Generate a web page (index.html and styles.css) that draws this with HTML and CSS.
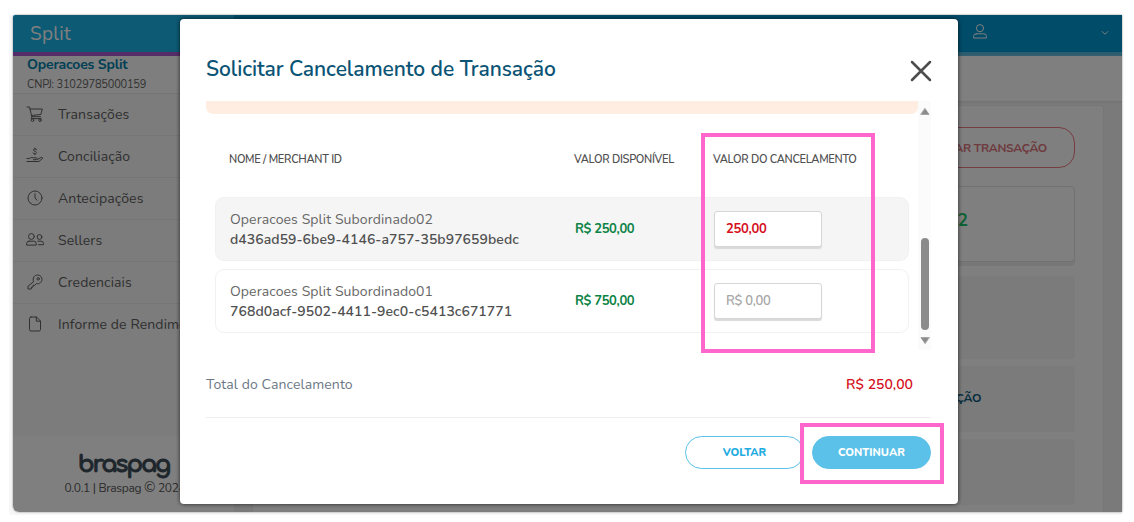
FILE: index.html
```html
<!DOCTYPE html>
<html lang="pt-BR">

<head>
    <meta charset="UTF-8" />
    <meta name="viewport" content="width=device-width, initial-scale=1.0" />
    <title>Split</title>
    <link rel="stylesheet" href="styles.css">
</head>

<body>
    <div class="frame">
        <div class="app">
            <!-- top bar -->
            <header class="top-bar">
                <div class="brand">Split</div>
                <div class="top-user">
                    <svg class="user-icon" viewBox="0 0 14 15">
                        <circle cx="7" cy="4.2" r="3.6" />
                        <path d="M3.2 9.8h7.6q2.6 0 2.6 2.6v1.6H.6v-1.6q0-2.600 2.600-2.600z" />
                    </svg>
                    <svg class="chevron" viewBox="0 0 8 6">
                        <path d="M1.200 1.500 4 4.300 6.800 1.500" />
                    </svg>
                </div>
            </header>

            <div class="content">
                <!-- sidebar -->
                <aside class="sidebar">
                    <div class="account">
                        <div class="account-name">Operacoes Split</div>
                        <div class="account-doc">CNPJ: 31029785000159</div>
                    </div>
                    <nav class="menu">
                        <a class="menu-item">
                            <svg viewBox="0 0 18 18">
                                <path d="M1 2h2.500l2.300 9.700h8.700M4 4h12.300l-1.500 5.500-9.500 1M6 11.700l-.8 1.900h9.800" />
                                <circle cx="6.500" cy="15.200" r="1.300" />
                                <circle cx="14" cy="15.200" r="1.300" />
                            </svg>
                            <span>Transações</span>
                        </a>
                        <a class="menu-item">
                            <svg viewBox="0 0 18 18">
                                <path d="M10.600 2.500q-.7-.7-1.700-.6c-2 .2-1.900 2 0 2.300 2 .3 2.200 2.300 0 2.500q-1.200.1-1.900-.7M8.900 1v1M8.900 6.700v1" />
                                <path d="M1 11.500h2.300q2-1.700 4-.7h3.200q1.300.9 0 1.900H7.500M11.600 12.400l3.600-2q1.600-.2 1.400 1.100l-3.700 3H1" />
                            </svg>
                            <span>Conciliação</span>
                        </a>
                        <a class="menu-item">
                            <svg viewBox="0 0 18 18">
                                <circle cx="9" cy="9" r="7" />
                                <path d="M9 4.700V9l2 2.200" />
                            </svg>
                            <span>Antecipações</span>
                        </a>
                        <a class="menu-item">
                            <svg viewBox="0 0 18 18">
                                <circle cx="5.400" cy="5.500" r="2.900" />
                                <circle cx="13.500" cy="6" r="2.400" />
                                <path d="M3 10.200h4.800q2.400 0 2.400 2.400v1.500H.6v-1.500q0-2.400 2.400-2.400zM11.800 10.200h3.300q2.400 0 2.400 2.200v1.300h-5" />
                            </svg>
                            <span>Sellers</span>
                        </a>
                        <a class="menu-item">
                            <svg viewBox="0 0 18 18">
                                <path d="M7.400 8.400C6.200 4.700 8.700 2 11.500 2S16 4.100 16 6.500s-2.500 4.900-5.600 4.100L8.700 12.300H7v1.800H5.300V16H2v-2.500z" />
                                <circle cx="12.200" cy="5.800" r="1.200" />
                            </svg>
                            <span>Credenciais</span>
                        </a>
                        <a class="menu-item">
                            <svg viewBox="0 0 18 18">
                                <path d="M5 2h5.500l4 4v8.500q0 1.500-1.500 1.500H5q-1.500 0-1.500-1.500v-11Q3.500 2 5 2zM10.300 2v4.200h4.200" />
                            </svg>
                            <span>Informe de Rendimentos</span>
                        </a>
                    </nav>
                    <div class="sidebar-footer">
                        <div class="logo">braspag</div>
                        <div class="version">0.0.1 | Braspag <span class="copy">©</span> 2024</div>
                    </div>
                </aside>

                <!-- page behind the modal -->
                <main class="page">
                    <div class="page-header"></div>
                    <section class="panel">
                        <button class="cancel-btn">CANCELAR TRANSAÇÃO</button>
                        <div class="card status"><span>2</span></div>
                        <div class="card tall"></div>
                        <div class="card link"><span>ÇÃO</span></div>
                        <div class="card"></div>
                    </section>
                </main>
            </div>
            <div class="backdrop"></div>
        </div>
    </div>

    <!-- modal -->
    <div class="modal">
        <div class="modal-header">
            <h1 class="modal-title">Solicitar Cancelamento de Transação</h1>
            <svg class="close" viewBox="0 0 22 22">
                <path d="M2 2 20 20M20 2 2 20" />
            </svg>
        </div>

        <div class="modal-body">
            <div class="scroll-content">
                <div class="alert"></div>
                <div class="row table-head">
                    <div class="head-name">NOME / MERCHANT ID</div>
                    <div class="head-available">VALOR DISPONÍVEL</div>
                    <div class="head-cancel">VALOR DO CANCELAMENTO</div>
                </div>
                <div class="row merchant active">
                    <div class="merchant-info">
                        <div class="merchant-name">Operacoes Split Subordinado02</div>
                        <div class="merchant-id">d436ad59-6be9-4146-a757-35b97659bedc</div>
                    </div>
                    <div class="available">R$ 250,00</div>
                    <div class="field filled">250,00</div>
                </div>
                <div class="row merchant">
                    <div class="merchant-info">
                        <div class="merchant-name">Operacoes Split Subordinado01</div>
                        <div class="merchant-id">768d0acf-9502-4411-9ec0-c5413c671771</div>
                    </div>
                    <div class="available">R$ 750,00</div>
                    <div class="field">R$ 0,00</div>
                </div>
            </div>
            <div class="scrollbar">
                <svg class="arrow" viewBox="0 0 10 7"><path d="M5 .5 9.200 6.500H.8z" /></svg>
                <div class="thumb"></div>
                <svg class="arrow" viewBox="0 0 10 7"><path d="M5 6.500.8.5h8.400z" /></svg>
            </div>
        </div>

        <div class="total">
            <span class="total-label">Total do Cancelamento</span>
            <span class="total-value">R$ 250,00</span>
        </div>

        <div class="modal-actions">
            <button class="btn back">VOLTAR</button>
            <button class="btn continue">CONTINUAR</button>
        </div>
    </div>

    <!-- highlights -->
    <div class="highlight highlight-column"></div>
    <div class="highlight highlight-continue"></div>
</body>

</html>
```

FILE: styles.css
```css
* {
    box-sizing: border-box;
}

html,
body {
    height: 100%;
    margin: 0;
    font-family: Nunito, Lato, sans-serif;
    background-color: white;
    overflow: hidden;
}

body {
    position: relative;
    padding: 15px 12px 0 9px;
}

button {
    font-family: inherit;
}

svg {
    fill: none;
    stroke: currentColor;
    stroke-linecap: round;
    stroke-linejoin: round;
}

.frame {
    height: 500px;
    padding: 0 0 3px 4px;
    background-color: #f7f7f7;
}

.app {
    position: relative;
    height: 497px;
    display: flex;
    flex-direction: column;
    border-radius: 3px 0 0 6px;
    box-shadow: 0 0 2px #777;
    overflow: hidden;
}

.backdrop {
    position: absolute;
    inset: 0;
    background-color: rgba(0, 0, 0, 0.5);
}

/* top bar */
.top-bar {
    display: flex;
    height: 41px;
    background: #0098d2;
}

.brand {
    width: 221px;
    padding: 7px 0 0 17px;
    background-color: #1ab4e8;
    border-bottom: 4px solid #ac58d0;
    color: white;
    font-size: 19px;
    line-height: 25px;
    letter-spacing: 0.3px;
}

.top-user {
    flex: 1;
    display: flex;
    align-items: center;
    justify-content: flex-end;
    gap: 114px;
    padding-right: 13px;
    border-bottom: 4px solid #55b8df;
    color: white;
}

.user-icon {
    width: 14px;
    height: 15px;
    margin-top: -4px;
    stroke-width: 1;
}

.chevron {
    width: 8px;
    height: 6px;
    margin-top: -2px;
}

.content {
    flex: 1;
    display: flex;
    min-height: 0;
}

/* sidebar */
.sidebar {
    width: 221px;
    display: flex;
    flex-direction: column;
    background-color: #f8f8f8;
}

.account {
    height: 37px;
    padding-left: 14px;
    background-color: #fcfcfc;
    white-space: nowrap;
}

.account-name {
    color: #0080ab;
    font-size: 14px;
    font-weight: 700;
    line-height: 18px;
    letter-spacing: -0.2px;
}

.account-doc {
    margin-top: 2px;
    color: #666;
    font-size: 11px;
    line-height: 17px;
    letter-spacing: -0.2px;
}

.menu {
    flex: 1;
}

.menu-item {
    height: 42px;
    display: flex;
    align-items: center;
    gap: 14px;
    padding-left: 13px;
    border-top: 1px solid #eaeaea;
    color: #606060;
    font-size: 14px;
    letter-spacing: 0.12px;
    white-space: nowrap;
}

.menu-item svg {
    width: 18px;
    height: 18px;
    margin-top: -1px;
}

.sidebar-footer {
    height: 76px;
    padding-top: 15px;
    background-color: white;
    text-align: center;
    white-space: nowrap;
}

.logo {
    color: #3c4c58;
    font-family: Comfortaa, Quicksand, Inter, sans-serif;
    font-size: 24px;
    font-weight: 700;
    line-height: 28px;
    letter-spacing: -2.1px;
    -webkit-text-stroke: 0.8px #3c4c58;
}

.version {
    padding-left: 3px;
    color: #555;
    font-size: 12px;
    line-height: 18px;
    letter-spacing: -0.3px;
}

.copy {
    font-size: 14px;
}

/* page */
.page {
    flex: 1;
    display: flex;
    flex-direction: column;
    background-color: #f5f5f5;
}

.page-header {
    height: 48px;
    background-color: white;
    box-shadow: 0 1px 3px #ddd;
}

.panel {
    flex: 1;
    display: flex;
    flex-direction: column;
    margin: 4px 18px 0;
    padding: 21px 28px 0;
    background-color: white;
    border: 1px solid #eee;
    border-bottom: none;
    border-radius: 4px 4px 0 0;
}

.cancel-btn {
    align-self: flex-end;
    flex: none;
    height: 41px;
    padding: 0 27px 0 36px;
    background-color: transparent;
    border: 1px solid #ea7a82;
    border-radius: 16px;
    color: #dd747c;
    font-size: 12px;
    font-weight: 700;
    letter-spacing: -0.3px;
}

.card {
    flex: none;
    height: 66px;
    margin-bottom: 7px;
    padding-right: 94px;
    display: flex;
    align-items: center;
    justify-content: flex-end;
    background-color: #f6f6f6;
    border-radius: 4px;
}

.status {
    height: 76px;
    margin: 18px 0 14px;
    padding-right: 106px;
    padding-bottom: 8px;
    background-color: white;
    border: 1px solid #e2e2e2;
    box-shadow: 0 4px 0 #efefef;
    color: #1ec46a;
    font-size: 17px;
    font-weight: 700;
}

.tall {
    height: 83px;
}

.link {
    padding-bottom: 3px;
    color: #0b5a7d;
    font-size: 12px;
    font-weight: 700;
    letter-spacing: -0.3px;
}

/* modal */
.modal {
    position: absolute;
    top: 19px;
    left: 180px;
    width: 778px;
    height: 485px;
    padding: 0 27px 0 26px;
    background-color: white;
    border-radius: 4px;
    box-shadow: 0 0 4px rgba(0, 0, 0, 0.7);
}

.modal-header {
    height: 82px;
    display: flex;
    justify-content: space-between;
    padding-top: 36px;
}

.modal-title {
    margin: 0;
    color: #0b5475;
    font-size: 21px;
    font-weight: 600;
    line-height: 29px;
    letter-spacing: -0.06px;
}

.close {
    width: 22px;
    height: 22px;
    margin: 5px -1px 0 0;
    color: #4d4d4d;
    stroke-width: 2.500;
}

.modal-body {
    height: 249px;
    display: flex;
    justify-content: space-between;
}

.scroll-content {
    width: 712px;
}

.alert {
    height: 13px;
    background-color: #ffede1;
    border-radius: 0 0 7px 7px;
}

.row {
    display: grid;
    grid-template-columns: 345px 139px 1fr;
    align-items: center;
    margin: 0 9px 8px;
    padding-left: 14px;
}

.table-head {
    height: 75px;
    padding: 15px 0 0 14px;
    color: #505050;
    font-size: 11px;
    font-weight: 600;
    letter-spacing: -0.29px;
    white-space: nowrap;
}

.merchant {
    height: 64px;
    border: 1px solid #f1f1f1;
    border-radius: 9px;
}

.active {
    background-color: #f5f5f5;
}

.merchant-info {
    padding-top: 2px;
    font-size: 14px;
    line-height: 20px;
    white-space: nowrap;
}

.merchant-name {
    color: #666;
    letter-spacing: 0.1px;
}

.merchant-id {
    color: #505050;
    font-weight: 600;
    letter-spacing: 0.06px;
}

.available {
    color: #0c8345;
    font-size: 13px;
    font-weight: 700;
    letter-spacing: -0.35px;
}

.field {
    width: 108px;
    height: 36px;
    padding-left: 11px;
    background-color: white;
    border: 1px solid #d6d6d6;
    border-radius: 3px;
    box-shadow: 0 2px 1px #d9d9d9;
    color: #a6a6a6;
    font-size: 13px;
    font-weight: 600;
    line-height: 34px;
    letter-spacing: -0.3px;
}

.filled {
    color: #d50f1c;
    font-weight: 700;
}

.scrollbar {
    width: 13px;
    display: flex;
    flex-direction: column;
    align-items: center;
    padding: 7px 0 6px;
    background-color: #fbfbfb;
}

.arrow {
    width: 10px;
    height: 7px;
    fill: #8b8b8b;
    stroke: #8b8b8b;
    stroke-width: 0.500;
}

.thumb {
    width: 8px;
    height: 92px;
    margin: auto 0 7px;
    background-color: #8b8b8b;
    border-radius: 4px;
}

.total {
    height: 68px;
    display: flex;
    justify-content: space-between;
    padding: 24px 18px 0 0;
    border-bottom: 1px solid #ededed;
    font-size: 14px;
    line-height: 21px;
}

.total-label {
    color: #6c7886;
    letter-spacing: 0.1px;
}

.total-value {
    color: #d50f1c;
    font-weight: 600;
}

.modal-actions {
    display: flex;
    justify-content: flex-end;
    gap: 8px;
    padding-top: 18px;
}

.btn {
    width: 119px;
    height: 33px;
    border: 1px solid #5bc1e8;
    border-radius: 17px;
    font-size: 11px;
    font-weight: 800;
}

.back {
    background-color: white;
    color: #21abe0;
}

.continue {
    background-color: #5bc1e8;
    color: white;
}

/* highlights */
.highlight {
    position: absolute;
    border: 4px solid #ff66cc;
}

.highlight-column {
    top: 133px;
    left: 701px;
    width: 174px;
    height: 220px;
}

.highlight-continue {
    top: 423px;
    left: 800px;
    width: 144px;
    height: 61px;
}
```
